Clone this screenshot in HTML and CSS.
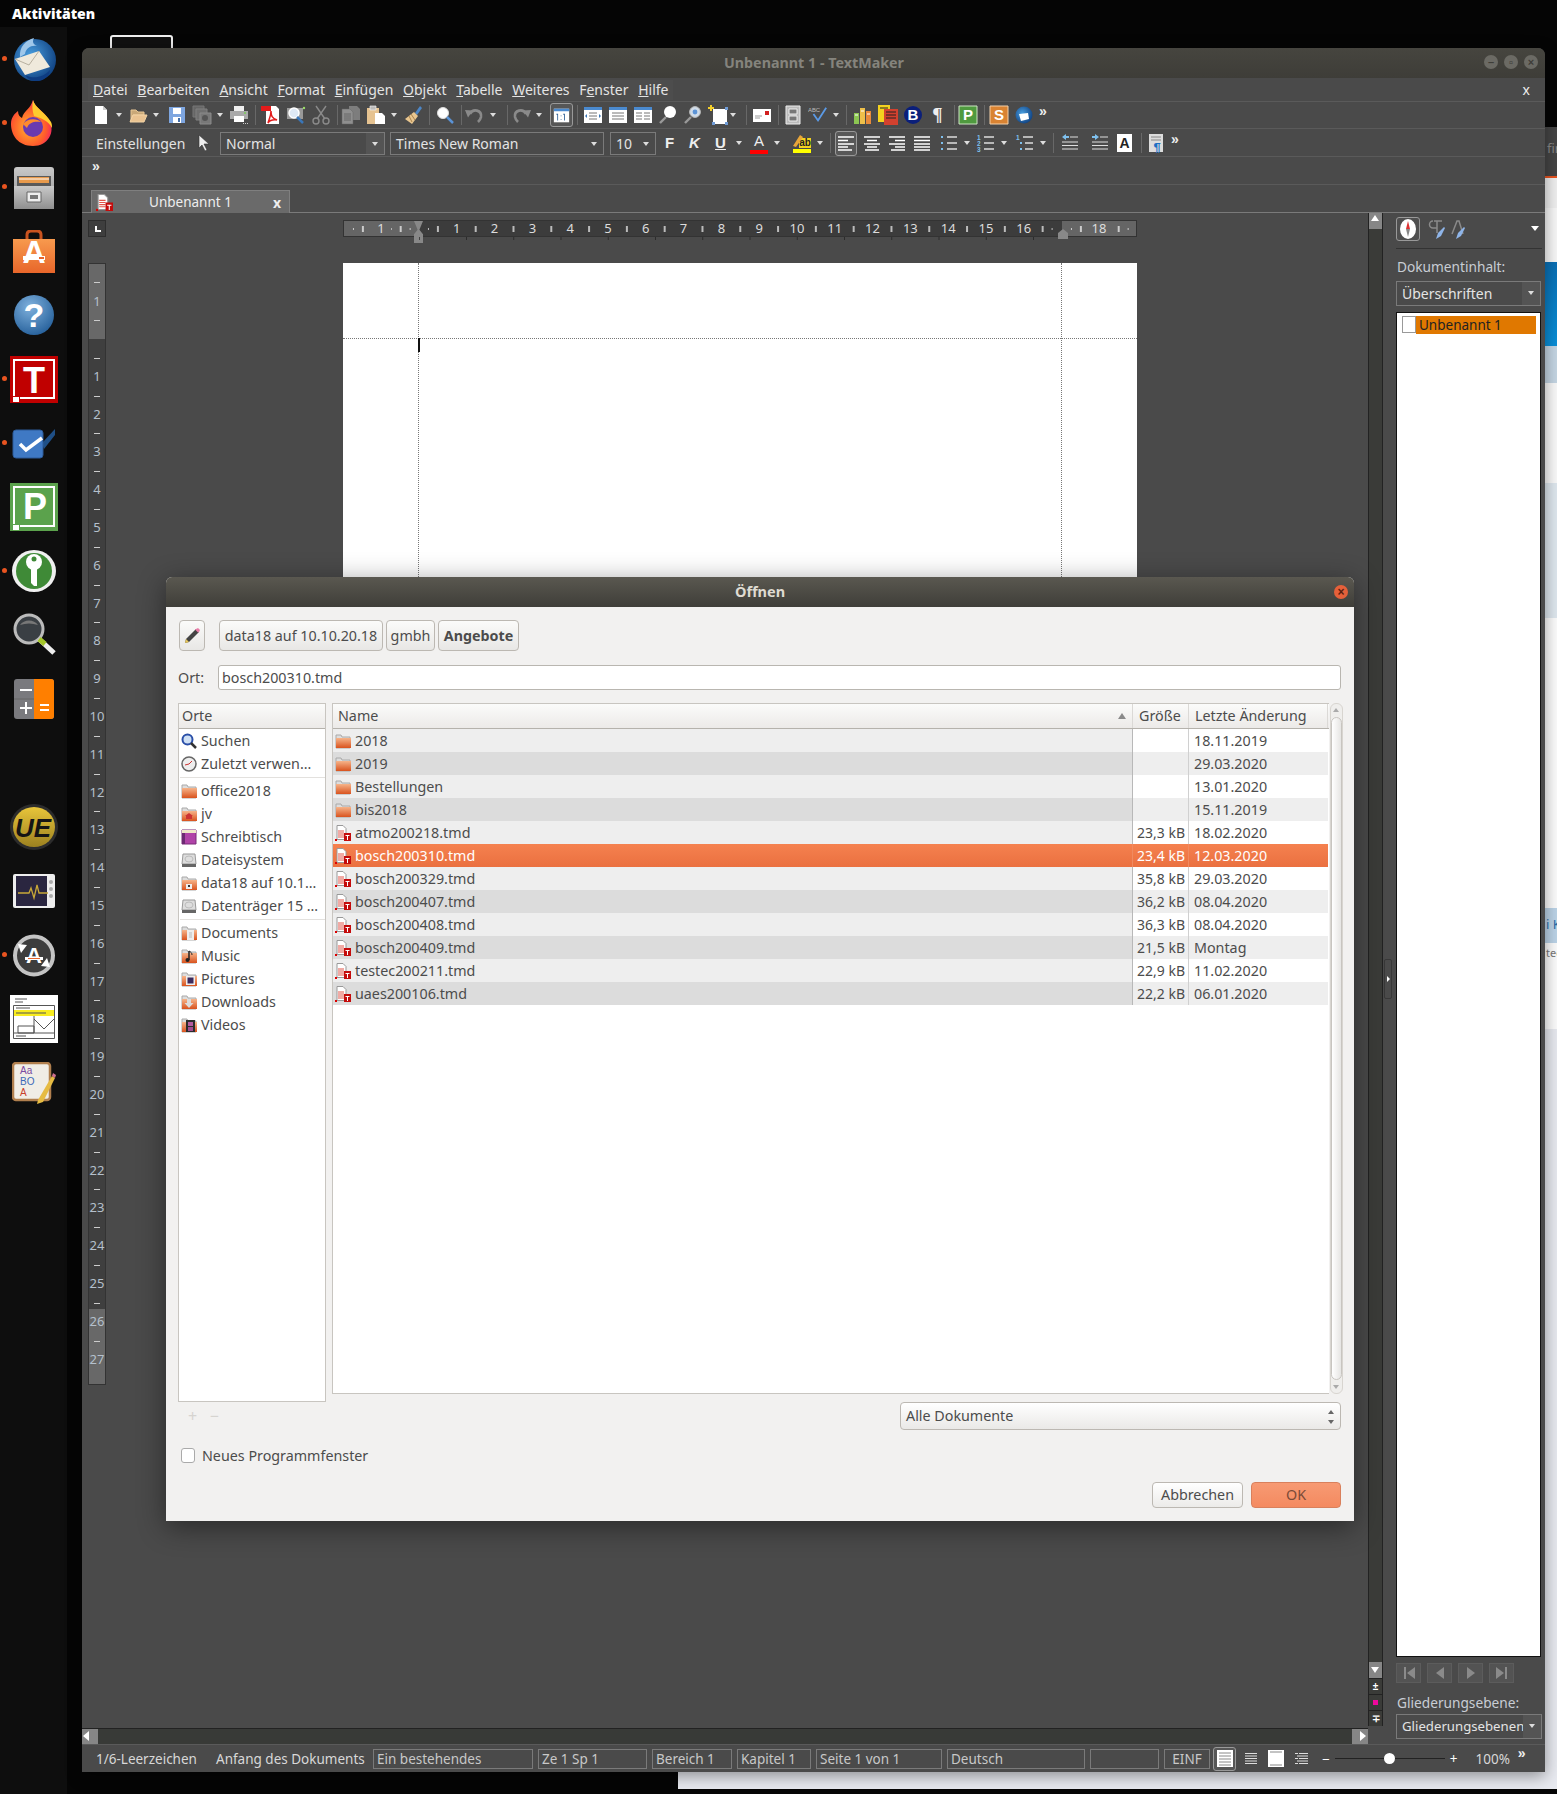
FILE: index.html
```html
<!DOCTYPE html>
<html lang="de">
<head>
<meta charset="utf-8">
<title>TextMaker</title>
<link rel="stylesheet" href="styles.css">
</head>
<body>
<svg class="defs" xmlns="http://www.w3.org/2000/svg">
  <defs>
    <linearGradient id="gFolder" x1="0" y1="0" x2="0" y2="1"><stop offset="0" stop-color="#f6b48a"/><stop offset="1" stop-color="#d9531e"/></linearGradient>
    <linearGradient id="gOrange" x1="0" y1="0" x2="0" y2="1"><stop offset="0" stop-color="#f79a4e"/><stop offset="1" stop-color="#e8662a"/></linearGradient>
    <linearGradient id="gGold" x1="0" y1="0" x2="0" y2="1"><stop offset="0" stop-color="#e8c53a"/><stop offset="1" stop-color="#9c8120"/></linearGradient>
    <linearGradient id="gCab" x1="0" y1="0" x2="0" y2="1"><stop offset="0" stop-color="#c9c9c9"/><stop offset="1" stop-color="#8f8f8f"/></linearGradient>
    <radialGradient id="gHelp" cx=".4" cy=".3" r=".8"><stop offset="0" stop-color="#7fb1dd"/><stop offset="1" stop-color="#1f5a96"/></radialGradient>
    <radialGradient id="gTb" cx=".4" cy=".4" r=".7"><stop offset="0" stop-color="#4a9fe0"/><stop offset="1" stop-color="#0b3a7a"/></radialGradient>
    <radialGradient id="gFf" cx=".45" cy=".6" r=".6"><stop offset="0" stop-color="#ffb52e"/><stop offset=".7" stop-color="#ff5a2c"/><stop offset="1" stop-color="#f01f6a"/></radialGradient>
    <symbol id="new" viewBox="0 0 20 20"><path d="M4 1h8l4 4v14H4z" fill="#fff"/><path d="M12 1v4h4" fill="#ccc"/></symbol>
    <symbol id="open" viewBox="0 0 20 20"><path d="M3 5h5l2 2h6v3H5L3 17z" fill="#c9a878" stroke="#e9c794"/><path d="M5 10h14l-3 7H2z" fill="#eac391" stroke="#f3d3a5"/></symbol>
    <symbol id="save" viewBox="0 0 20 20"><path d="M2 2h16v16H2z" fill="#7ea6e0"/><path d="M6 3h8v6H6z" fill="#fff"/><path d="M6 12h8v6H6z" fill="#fff"/><path d="M11 13h2v4h-2z" fill="#466fa8"/></symbol>
    <symbol id="saveall" viewBox="0 0 20 20"><path d="M1 1h11v11H1z" fill="#666" stroke="#777"/><path d="M4 4h11v11H4z" fill="#6f6f6f" stroke="#808080"/><path d="M8 8h11v11H8z" fill="#787878" stroke="#8a8a8a"/><circle cx="13" cy="13" r="3" fill="#555"/></symbol>
    <symbol id="print" viewBox="0 0 20 20"><path d="M5 1h10v5H5z" fill="#eee"/><path d="M1 6h18v8H1z" fill="#aaa"/><path d="M5 11h10v6H5z" fill="#fff"/><circle cx="16" cy="8" r="1" fill="#7c5"/><path d="M14 18h1v1h-1zM16 18h1v1h-1zM18 18h1v1h-1z" fill="#ccc"/></symbol>
    <symbol id="pdf" viewBox="0 0 20 20"><path d="M5 1h10l3 3v15H5z" fill="#fff"/><path d="M0 1h10v5H0z" fill="#e21b1b"/><path d="M10 6c0 5 1 7 6 9-4-.5-7 0-9 3 1-4 3-7 3-12z" fill="none" stroke="#e21b1b" stroke-width="1.5"/></symbol>
    <symbol id="preview" viewBox="0 0 20 20"><path d="M1 3h16v11H1z" fill="#999"/><circle cx="8" cy="8" r="5" fill="#dfe9f5" stroke="#fff" stroke-width="1.5"/><path d="M11 12l6 6" stroke="#3a76b8" stroke-width="2.5"/><circle cx="18" cy="3" r="1.2" fill="#9d6"/></symbol>
    <symbol id="cut" viewBox="0 0 20 20"><path d="M5 1l9 13M15 1L6 14" stroke="#8a8a8a" stroke-width="1.4" fill="none"/><circle cx="5" cy="16" r="3" fill="none" stroke="#8a8a8a" stroke-width="1.4"/><circle cx="15" cy="16" r="3" fill="none" stroke="#8a8a8a" stroke-width="1.4"/></symbol>
    <symbol id="copy" viewBox="0 0 20 20"><path d="M8 1h8l3 3v11H8z" fill="#7d7d7d"/><path d="M1 4h8l3 3v12H1z" fill="#8f8f8f" stroke="#666" stroke-width=".5"/><path d="M3 9h7M3 11h7M3 13h7M3 15h7" stroke="#666"/></symbol>
    <symbol id="paste" viewBox="0 0 20 20"><path d="M1 3h12v16H1z" fill="#e6c391"/><path d="M4 1h6v4H4z" fill="#bbb" stroke="#eee" stroke-width=".7"/><path d="M9 8h7l3 3v8H9z" fill="#fff"/></symbol>
    <symbol id="brush" viewBox="0 0 20 20"><path d="M12 8L17 1l2 2-5 7z" fill="#4d86c6"/><path d="M11 7l4 4-6 8-7-5z" fill="#e9c68f"/><path d="M6 11l3 6M8 9l4 6" stroke="#a8824c"/></symbol>
    <symbol id="find" viewBox="0 0 20 20"><circle cx="8" cy="8" r="5.500" fill="#fff" stroke="#ddd"/><path d="M12 12l6 6" stroke="#5b93d6" stroke-width="2.500"/></symbol>
    <symbol id="undo" viewBox="0 0 20 20"><path d="M5 9c3-6 12-4 11 3-.4 2-1 3-3 5" fill="none" stroke="#8a8a8a" stroke-width="2.6"/><path d="M0 5l8 .5-5 7z" fill="#8a8a8a"/></symbol>
    <symbol id="redo" viewBox="0 0 20 20"><path d="M15 9C12 3 3 5 4 12c.4 2 1 3 3 5" fill="none" stroke="#8a8a8a" stroke-width="2.6"/><path d="M20 5l-8 .5 5 7z" fill="#8a8a8a"/></symbol>
    <symbol id="v11" viewBox="0 0 20 20"><path d="M1 2h18v16H1z" fill="#fff"/><path d="M1 2h18v3H1z" fill="#4a8ad0"/><path d="M4 8h2v8H5V9H4zM12 8h2v8h-1V9h-1zM9 10h1v1H9zM9 14h1v1H9z" fill="#2d5f96"/></symbol>
    <symbol id="vnorm" viewBox="0 0 20 20"><path d="M1 2h18v16H1z" fill="#fff"/><path d="M1 2h18v3H1z" fill="#4a8ad0"/><path d="M6 8h8M6 11h8M6 14h8" stroke="#777"/><path d="M2 11l2-2v4zM18 11l-2-2v4z" fill="#3a76b8"/></symbol>
    <symbol id="vlines" viewBox="0 0 20 20"><path d="M1 2h18v16H1z" fill="#fff"/><path d="M1 2h18v3H1z" fill="#4a8ad0"/><path d="M4 8h12M4 11h12M4 14h12" stroke="#777"/></symbol>
    <symbol id="vtable" viewBox="0 0 20 20"><path d="M1 2h18v16H1z" fill="#fff"/><path d="M1 2h18v3H1z" fill="#4a8ad0"/><path d="M3 8h6M3 11h6M3 14h6M11 8h6M11 11h6M11 14h6" stroke="#777"/></symbol>
    <symbol id="mag" viewBox="0 0 20 20"><circle cx="12" cy="7" r="6" fill="#fff"/><path d="M8 12l-6 6" stroke="#999" stroke-width="2.4"/></symbol>
    <symbol id="magb" viewBox="0 0 20 20"><circle cx="12" cy="7" r="5.4" fill="#cfdbe8" stroke="#bbb"/><circle cx="12" cy="7" r="2.4" fill="#5b93d6"/><path d="M8 12l-6 6" stroke="#999" stroke-width="2.4"/></symbol>
    <symbol id="frame" viewBox="0 0 20 20"><path d="M5 4h14v15H5z" fill="#fff"/><path d="M3 0v6M0 3h6" stroke="#f4cf2a" stroke-width="2"/><path d="M17 2h3v3h-3zM4 17h3v3H4zM17 17h3v3h-3z" fill="#6f9bd6"/></symbol>
    <symbol id="mail" viewBox="0 0 20 20"><path d="M1 4h18v13H1z" fill="#fff"/><path d="M13 6h4v4h-4z" fill="#d21f1f"/><path d="M3 11h7M3 13h5" stroke="#999"/></symbol>
    <symbol id="pagef" viewBox="0 0 20 20"><path d="M3 1h14v18H3z" fill="#bbb" stroke="#eee"/><path d="M6 4h8v5H6zM6 11h8v5H6z" fill="#777" stroke="#eee"/></symbol>
    <symbol id="spell" viewBox="0 0 22 20"><text x="0" y="7" class="svgt8">ABC</text><path d="M6 9l5 7 9-14" fill="none" stroke="#5b9ae6" stroke-width="2"/></symbol>
    <symbol id="books" viewBox="0 0 20 20"><path d="M1 8h5v11H1z" fill="#8cc652"/><path d="M7 3h5v16H7z" fill="#eec04a"/><path d="M13 6h5v13h-5z" fill="#e88a3a"/><path d="M2 10h3M8 6h3M14 9h3" stroke="#fff"/></symbol>
    <symbol id="db" viewBox="0 0 20 20"><path d="M0 0h12v17H0z" fill="#f4d21f"/><path d="M6 4h14v16H6z" fill="#d2412f"/><path d="M2 3h8M8 7h10M8 10h10M8 13h10" stroke="#222" stroke-width="1.2"/></symbol>
    <symbol id="bcirc" viewBox="0 0 20 20"><circle cx="10" cy="10" r="9" fill="#0b1f7a"/><text x="10" y="15" class="svgb">B</text></symbol>
    <symbol id="gp" viewBox="0 0 20 20"><path d="M1 1h18v18H1z" fill="#4f9a3f" stroke="#cde5c3"/><text x="10" y="15" class="svgb">P</text></symbol>
    <symbol id="os" viewBox="0 0 20 20"><path d="M1 1h18v18H1z" fill="#d98332" stroke="#f4d0a8"/><text x="10" y="15" class="svgb">S</text></symbol>
    <symbol id="tbird" viewBox="0 0 20 20"><circle cx="10" cy="10" r="8.5" fill="url(#gTb)"/><path d="M5 9l9-1 1 6-8 2z" fill="#fff"/></symbol>
    <symbol id="alignl" viewBox="0 0 20 20"><path d="M2 4h16M2 7.500h10M2 11h16M2 14h10M2 17h14" stroke="#fff" stroke-width="1.4"/></symbol>
    <symbol id="alignc" viewBox="0 0 20 20"><path d="M2 4h16M5 7.500h10M2 11h16M5 14h10M3 17h14" stroke="#fff" stroke-width="1.4"/></symbol>
    <symbol id="alignr" viewBox="0 0 20 20"><path d="M2 4h16M8 7.500h10M2 11h16M8 14h10M4 17h14" stroke="#fff" stroke-width="1.4"/></symbol>
    <symbol id="alignj" viewBox="0 0 20 20"><path d="M2 4h16M2 7.500h16M2 11h16M2 14h16M2 17h16" stroke="#fff" stroke-width="1.4"/></symbol>
    <symbol id="bul" viewBox="0 0 20 20"><path d="M2 3h2v2H2zM2 9h2v2H2zM2 15h2v2H2z" fill="#7fc0ee"/><path d="M8 4h10M8 10h10M8 16h10" stroke="#ddd" stroke-width="1.3"/></symbol>
    <symbol id="num" viewBox="0 0 20 20"><text x="1" y="7" class="svgn">1</text><text x="1" y="13" class="svgn">2</text><text x="1" y="19" class="svgn">3</text><path d="M8 4h10M8 10h10M8 16h10" stroke="#ddd" stroke-width="1.3"/></symbol>
    <symbol id="outl" viewBox="0 0 20 20"><text x="1" y="7" class="svgn">1</text><path d="M5 9h2v2H5zM5 15h2v2H5z" fill="#7fc0ee"/><path d="M8 4h10M10 10h8M10 16h8" stroke="#ddd" stroke-width="1.3"/></symbol>
    <symbol id="indl" viewBox="0 0 20 20"><path d="M10 4h8M2 9h16M2 12.500h16M2 16h16" stroke="#ddd" stroke-width="1.2"/><path d="M2 4l4-3v2h3v2H6v2z" fill="#7fc0ee"/></symbol>
    <symbol id="indr" viewBox="0 0 20 20"><path d="M10 4h8M2 9h16M2 12.500h16M2 16h16" stroke="#ddd" stroke-width="1.2"/><path d="M9 4L5 1v2H2v2h3v2z" fill="#7fc0ee"/></symbol>
    <symbol id="para" viewBox="0 0 20 20"><path d="M3 1h14v18H3z" fill="#ddd"/><path d="M5 4h10M5 7h10" stroke="#888"/><text x="11" y="19" class="svgp">¶</text></symbol>
    <symbol id="tmd" viewBox="0 0 16 16"><path d="M2 .5h6l3 3v11H2z" fill="#fff" stroke="#999"/><path d="M3 6h6M3 8h6M3 10h6M3 12h6" stroke="#e2564a"/><path d="M0 14h2v2H0z" fill="#d00"/><path d="M9 8h7v8H9z" fill="#c40b0b"/><path d="M10.500 10h4v1h-1.500v4h-1v-4h-1.500z" fill="#fff"/></symbol>
    <symbol id="folder" viewBox="0 0 16 16"><path d="M1 2h5l1 2h8v11H1z" fill="#ddd" stroke="#aaa"/><path d="M1 5h15v10H1z" fill="url(#gFolder)"/></symbol>
    <symbol id="fhome" viewBox="0 0 16 16"><use href="#folder"/><path d="M8 7l4 3h-1v3H5v-3H4z" fill="#c33"/></symbol>
    <symbol id="fnet" viewBox="0 0 16 16"><use href="#folder"/><path d="M5 9h6v5H5z" fill="#eee"/><path d="M7 10h2v2H7z" fill="#333"/></symbol>
    <symbol id="fdoc" viewBox="0 0 16 16"><use href="#folder"/><path d="M6 5h7v10H6z" fill="#eee"/><path d="M8 8h3M8 10h3M8 12h3" stroke="#bbb"/></symbol>
    <symbol id="fmus" viewBox="0 0 16 16"><use href="#folder"/><path d="M8 3v9" stroke="#222" stroke-width="1.500"/><path d="M8 3c2 1 3 2 3 4" fill="none" stroke="#222"/><circle cx="6.500" cy="12" r="2" fill="#222"/></symbol>
    <symbol id="fpic" viewBox="0 0 16 16"><use href="#folder"/><path d="M5 5h9v9H5z" fill="#eee"/><path d="M6.500 6.500h6v6h-6z" fill="#3c2a5c"/></symbol>
    <symbol id="fdown" viewBox="0 0 16 16"><use href="#folder"/><path d="M6 5h4v4h2.500L8 14 3.500 9H6z" fill="#ddd"/></symbol>
    <symbol id="fvid" viewBox="0 0 16 16"><use href="#folder"/><path d="M5 3h9v12H5z" fill="#2c2c2c"/><path d="M7 5h5v4H7z" fill="#b45aa0"/><path d="M7 10h5v4H7z" fill="#a14a90"/></symbol>
    <symbol id="search" viewBox="0 0 16 16"><circle cx="6.500" cy="6.500" r="5" fill="#cfe0f4" stroke="#2a4fa8" stroke-width="2"/><path d="M10 10l5 5" stroke="#333" stroke-width="2.500"/></symbol>
    <symbol id="clock" viewBox="0 0 16 16"><circle cx="8" cy="8" r="7" fill="#eee" stroke="#666" stroke-width="1.500"/><path d="M8 8l3-3M8 8L4 9" stroke="#c33"/></symbol>
    <symbol id="desk" viewBox="0 0 16 16"><path d="M1 1h14v14H1z" fill="#b043a8" stroke="#7a2a78"/><path d="M1 1h14v3H1z" fill="#eee8c8"/><path d="M1 4h3v11H1z" fill="#6c2a72"/></symbol>
    <symbol id="disk" viewBox="0 0 16 16"><path d="M2 2h12l1 10H1z" fill="#ddd" stroke="#999"/><path d="M1 12h14v3H1z" fill="#666"/><ellipse cx="8" cy="7" rx="4" ry="3" fill="none" stroke="#bbb"/></symbol>
  </defs>
</svg>

<div class="strip-top"><b>Aktivitäten</b></div>
<div class="thumb"></div>

<div class="backwin">
  <div class="bw bw-title"><span>fir</span></div>
  <div class="bw bw-orange"></div>
  <div class="bw bw-light"></div>
  <div class="bw bw-w1"></div>
  <div class="bw bw-blue"></div>
  <div class="bw bw-pale"></div>
  <div class="bw bw-w2"></div>
  <div class="bw bw-pale2"></div>
  <div class="bw bw-w3"></div>
  <div class="bw bw-link"><span>i K</span></div>
  <div class="bw bw-text"><span>tec</span></div>
  <div class="bw bw-rest"></div>
</div>

<nav class="dock">
  <div class="di dot"><svg width="44" height="45" viewBox="0 0 44 45"><circle cx="23" cy="23" r="21" fill="url(#gTb)"/><path d="M8 20C7 10 14 3 22 1c-2 4-1 6 3 8-6-1-11 2-12 8z" fill="#9fc7ea"/><path d="M3 22l24-8 11 16-25 8z" fill="#efe9dc"/><path d="M3 22l14 6 10-14" fill="none" stroke="#b8b0a0"/><path d="M13 38c8 4 18 3 25-5 0 6-8 12-14 11-5 0-9-3-11-6z" fill="#0e3c82"/></svg></div>
  <div class="di dot"><svg width="45" height="46" viewBox="0 0 45 46"><path d="M22 0c2 8 10 10 16 20 7 12-1 26-16 26S0 35 0 24c0-6 3-10 7-13 0 4 2 6 4 7 2-8 8-8 11-18z" fill="url(#gFf)"/><path d="M22 0c2 8 12 12 18 22 1 2 1 4 1 6-4-8-12-10-18-12C21 10 21 5 22 0z" fill="#ffcb2e"/><circle cx="22" cy="27" r="10" fill="#6a3ab0"/><path d="M12 24c4-6 14-6 18-2-6-1-12 0-14 6z" fill="#ff8a2c"/></svg></div>
  <div class="di dot"><svg width="42" height="43" viewBox="0 0 42 43"><path d="M1 4q0-3 3-3h34q3 0 3 3v36q0 3-3 3H4q-3 0-3-3z" fill="url(#gCab)"/><path d="M4 10h34v12H4z" fill="#5a5a5a"/><path d="M6 11h30v6H6z" fill="#e89a4c"/><path d="M6 13h30" stroke="#fff"/><path d="M1 20h40v23H1z" fill="url(#gCab)"/><path d="M14 26h14v10H14z" fill="#eee" stroke="#666"/><path d="M17 29h8v4h-8z" fill="#777"/></svg></div>
  <div class="di"><svg width="42" height="43" viewBox="0 0 42 43"><path d="M14 12V5q0-4 4-4h6q4 0 4 4v7" fill="none" stroke="#c9531f" stroke-width="3"/><path d="M0 9h42v34H0z" fill="url(#gOrange)"/><text x="21" y="33" class="svga">A</text><path d="M10 26h22v4H10z" fill="#fff"/><path d="M26 27h5v2h-5z" fill="#e8662a"/></svg></div>
  <div class="di"><svg width="40" height="40" viewBox="0 0 40 40"><circle cx="20" cy="20" r="20" fill="url(#gHelp)"/><text x="20" y="32" class="svgq">?</text></svg></div>
  <div class="di dot"><svg width="48" height="47" viewBox="0 0 48 47"><path d="M0 0h48v47H0z" fill="#c00000"/><path d="M4 40V4h40v38H10" fill="none" stroke="#fff" stroke-width="2"/><path d="M3 41h6v5H3z" fill="#fff"/><text x="24" y="37" class="svgT">T</text></svg></div>
  <div class="di dot"><svg width="44" height="32" viewBox="0 0 44 32"><path d="M30 16L43 2v6L32 22z" fill="#1f4f86"/><rect x="1" y="3" width="30" height="28" rx="3" fill="#3f79c4" stroke="#2c5a98"/><path d="M8 17l6 6L30 11" fill="none" stroke="#fff" stroke-width="3.500"/></svg></div>
  <div class="di"><svg width="48" height="48" viewBox="0 0 48 48"><path d="M0 0h48v48H0z" fill="#5ba24c"/><path d="M4 41V4h40v39H10" fill="none" stroke="#fff" stroke-width="2"/><path d="M3 42h6v5H3z" fill="#fff"/><text x="25" y="36" class="svgT">P</text></svg></div>
  <div class="di dot"><svg width="44" height="42" viewBox="0 0 44 42"><ellipse cx="22" cy="21" rx="22" ry="21" fill="#f0f0f0"/><ellipse cx="22" cy="21" rx="18" ry="18" fill="#3f8a37"/><circle cx="22" cy="12" r="8" fill="#fff"/><path d="M19 14h6v22h-3l-3-3z" fill="#fff"/><circle cx="22" cy="9" r="2.500" fill="#3f8a37"/></svg></div>
  <div class="di"><svg width="44" height="44" viewBox="0 0 44 44"><circle cx="17" cy="16" r="14" fill="#3a3f44" stroke="#bbb" stroke-width="3"/><path d="M8 12c4-6 14-6 18 0-6-2-12-2-18 0z" fill="#777"/><path d="M27 26l15 14" stroke="#eee" stroke-width="5"/><path d="M27 26l6 5" stroke="#a4c62a" stroke-width="5"/></svg></div>
  <div class="di"><svg width="40" height="40" viewBox="0 0 40 40"><rect width="40" height="40" rx="3" fill="#7a7a7e"/><path d="M20 0h17q3 0 3 3v34q0 3-3 3H20z" fill="#ff7f00"/><path d="M6 11h12M6 29h12M12 23v12M26 26h9M26 31h9" stroke="#fff" stroke-width="2"/><path d="M0 20h20" stroke="#666"/></svg></div>
  <div class="di"></div>
  <div class="di"><svg width="48" height="48" viewBox="0 0 48 48"><ellipse cx="24" cy="24" rx="24" ry="23" fill="#2c2c2c"/><ellipse cx="24" cy="24" rx="21" ry="20" fill="url(#gGold)"/><text x="23" y="34" class="svgue">UE</text></svg></div>
  <div class="di"><svg width="42" height="34" viewBox="0 0 42 34"><rect width="42" height="34" rx="2" fill="#eee"/><path d="M3 2h31v30H3z" fill="#2a2640"/><path d="M5 19h11l2-5 3 10 3-13 2 8h9" fill="none" stroke="#c8a838" stroke-width="1.300"/><circle cx="38" cy="8" r="2" fill="#aaa"/><circle cx="38" cy="15" r="2" fill="#aaa"/><circle cx="38" cy="22" r="2" fill="#aaa"/></svg></div>
  <div class="di dot"><svg width="42" height="43" viewBox="0 0 42 43"><circle cx="21" cy="21.500" r="19" fill="#3d3d3d" stroke="#c4c4c4" stroke-width="4"/><path d="M5 10l9 1-6 8zM37 33l-9-1 6-8z" fill="#fff"/><text x="21" y="29" class="svgupd">A</text><path d="M12 23h18v3H12z" fill="#fff"/><path d="M15 24h12v1H15z" fill="#e8662a"/></svg></div>
  <div class="di"><svg width="48" height="48" viewBox="0 0 48 48"><path d="M0 0h48v48H0z" fill="#fff"/><path d="M5 4h12M5 7h8" stroke="#555"/><path d="M3.500 10.500h41v33h-41z" fill="#fff" stroke="#555"/><path d="M4 15h40v6H4z" fill="#f8ec20"/><path d="M6 13h14M6 18h30M4 38h40M24 21v17" stroke="#555"/><path d="M8 31h16v7H8zM24 24l10 10 10-10" fill="none" stroke="#555"/><path d="M6 41h10" stroke="#555"/></svg></div>
  <div class="di"><svg width="44" height="42" viewBox="0 0 44 42"><rect x="1" y="1" width="37" height="37" rx="3" fill="#f0ede6" stroke="#b07f4e" stroke-width="2.500"/><text x="8" y="12" class="svgnote1">Aa</text><text x="8" y="23" class="svgnote2">BO</text><text x="8" y="34" class="svgnote3">A</text><path d="M26 38L40 14l3 2-12 24-6 2z" fill="#e6bb42"/><path d="M40 14l3 2 1-3-3-2z" fill="#d07090"/></svg></div>
</nav>

<section class="win">
  <header class="win-title">
    <span class="wt">Unbenannt 1 - TextMaker</span>
    <span class="wbtns"><i>–</i><i>▫</i><i>×</i></span>
  </header>
  <div class="menubar">
    <div class="menus">
      <span><u>D</u>atei</span><span><u>B</u>earbeiten</span><span><u>A</u>nsicht</span><span><u>F</u>ormat</span><span><u>E</u>infügen</span><span><u>O</u>bjekt</span><span><u>T</u>abelle</span><span><u>W</u>eiteres</span><span>F<u>e</u>nster</span><span><u>H</u>ilfe</span>
    </div>
    <span class="mclose">x</span>
  </div>

  <div class="tb t1">
    <span class="b"><svg><use href="#new"/></svg></span><span class="d"></span>
    <span class="b"><svg><use href="#open"/></svg></span><span class="d"></span>
    <span class="b g2"><svg><use href="#save"/></svg></span>
    <span class="b"><svg><use href="#saveall"/></svg></span><span class="d"></span>
    <span class="b"><svg><use href="#print"/></svg></span><span class="s"></span>
    <span class="b r1"><svg><use href="#pdf"/></svg></span>
    <span class="b"><svg><use href="#preview"/></svg></span>
    <span class="b"><svg><use href="#cut"/></svg></span><span class="s"></span>
    <span class="b r3"><svg><use href="#copy"/></svg></span>
    <span class="b"><svg><use href="#paste"/></svg></span><span class="d"></span>
    <span class="b"><svg><use href="#brush"/></svg></span><span class="s"></span>
    <span class="b r1"><svg><use href="#find"/></svg></span><span class="s"></span>
    <span class="b r3"><svg><use href="#undo"/></svg></span><span class="d"></span><span class="s g4"></span>
    <span class="b r3"><svg><use href="#redo"/></svg></span><span class="d"></span>
    <span class="b box g5"><svg><use href="#v11"/></svg></span><span class="s"></span>
    <span class="b r1"><svg><use href="#vnorm"/></svg></span>
    <span class="b"><svg><use href="#vlines"/></svg></span>
    <span class="b"><svg><use href="#vtable"/></svg></span>
    <span class="b"><svg><use href="#mag"/></svg></span>
    <span class="b"><svg><use href="#magb"/></svg></span>
    <span class="b"><svg><use href="#frame"/></svg></span><span class="d r3"></span><span class="s g3"></span>
    <span class="b r1"><svg><use href="#mail"/></svg></span><span class="s"></span>
    <span class="b r2"><svg><use href="#pagef"/></svg></span>
    <span class="b"><svg><use href="#spell"/></svg></span><span class="d"></span><span class="s"></span>
    <span class="b"><svg><use href="#books"/></svg></span>
    <span class="b"><svg><use href="#db"/></svg></span>
    <span class="b"><svg><use href="#bcirc"/></svg></span>
    <span class="b pil">¶</span><span class="s"></span>
    <span class="b r3"><svg><use href="#gp"/></svg></span><span class="s"></span>
    <span class="b r2"><svg><use href="#os"/></svg></span>
    <span class="b"><svg><use href="#tbird"/></svg></span>
    <span class="more">»</span>
  </div>

  <div class="tb t2">
    <span class="tlabel">Einstellungen</span>
    <svg class="cursor" width="14" height="18" viewBox="0 0 14 18"><path d="M2 1v13l3-3 3 6 2-1-3-6h5z" fill="#eee" stroke="#333" stroke-width=".6"/></svg>
    <span class="combo c-norm">Normal<em></em></span>
    <span class="combo c-font">Times New Roman<em></em></span>
    <span class="combo c-size">10<em></em></span>
    <span class="b g1 fmt fb">F</span><span class="b fmt fi">K</span><span class="b g1 fmt fu">U</span><span class="d"></span>
    <span class="b g2 fmt fa">A</span><span class="d"></span>
    <svg class="hl" width="25" height="22" viewBox="0 0 25 22"><path d="M4 17h18v4H4z" fill="#ff0"/><path d="M10 6h12v10H10z" fill="#f4d21f"/><path d="M4 14l7-11 3 2-7 10z" fill="#e8a63a"/><text x="16" y="14" class="svghl">ab</text></svg><span class="d"></span><span class="s"></span>
    <span class="b box2 g1"><svg><use href="#alignl"/></svg></span>
    <span class="b g2"><svg><use href="#alignc"/></svg></span>
    <span class="b"><svg><use href="#alignr"/></svg></span>
    <span class="b"><svg><use href="#alignj"/></svg></span>
    <span class="b g2"><svg><use href="#bul"/></svg></span><span class="d"></span>
    <span class="b"><svg><use href="#num"/></svg></span><span class="d"></span>
    <span class="b g2"><svg><use href="#outl"/></svg></span><span class="d"></span><span class="s"></span>
    <span class="b"><svg><use href="#indl"/></svg></span>
    <span class="b g5"><svg><use href="#indr"/></svg></span>
    <span class="b"><span class="abox">A</span></span><span class="s"></span>
    <span class="b r2"><svg><use href="#para"/></svg></span>
    <span class="more">»</span>
  </div>

  <div class="tb t3"><span class="more">»</span></div>

  <div class="tabs">
    <div class="tab"><svg width="17" height="17"><use href="#tmd"/></svg><span>Unbenannt 1</span><b>x</b></div>
  </div>

  <div class="body">
    <div class="left">
      <div class="doc">
        <div class="corner"><span></span></div>
        <div class="hruler">
          <div class="hr-side hr-l"><span class="rn rn1">1</span></div>
          <div class="hr-mid">
            <span>1</span><span>2</span><span>3</span><span>4</span><span>5</span><span>6</span><span>7</span><span>8</span><span>9</span><span>10</span><span>11</span><span>12</span><span>13</span><span>14</span><span>15</span><span>16</span>
          </div>
          <div class="hr-side hr-r"><span class="rn rn18">18</span></div>
          <i class="marker m-l"></i><i class="marker m-r"></i>
        </div>
        <div class="vruler">
          <div class="vr-light vr-top"><span>1</span></div>
          <div class="vr-cells">
            <span>1</span><span>2</span><span>3</span><span>4</span><span>5</span><span>6</span><span>7</span><span>8</span><span>9</span><span>10</span><span>11</span><span>12</span><span>13</span><span>14</span><span>15</span><span>16</span><span>17</span><span>18</span><span>19</span><span>20</span><span>21</span><span>22</span><span>23</span><span>24</span><span>25</span><span>26</span><span>27</span>
          </div>
        </div>
        <div class="page">
          <i class="pl pl-v1"></i><i class="pl pl-v2"></i><i class="pl pl-h"></i><i class="caret"></i>
        </div>
      </div>
      <div class="hscroll"><span class="sb sb-l"></span><span class="sb sb-r"></span></div>
    </div>
    <div class="vscroll">
      <span class="vb vb-up"></span>
      <span class="vfill"></span>
      <span class="vb vb-dn"></span>
      <span class="vs">±</span><span class="vs vdot"><i></i></span><span class="vs">∓</span>
    </div>
    <aside class="side">
      <i class="handle"></i>
      <div class="side-tabs">
        <span class="compass"><svg width="18" height="22" viewBox="0 0 18 22"><ellipse cx="9" cy="11" rx="8" ry="10" fill="#fff"/><path d="M9 3l2 8H7z" fill="#d33"/><path d="M9 19l2-8H7z" fill="#888"/></svg></span>
        <svg class="st" width="18" height="22" viewBox="0 0 18 22"><path d="M6 2h8M9 2v12M5 2a3 3 0 0 0 0 7h4" fill="none" stroke="#8a8a8a" stroke-width="1.500"/><path d="M8 20l2-6 6-6 1 1-4 8z" fill="#8eb4e8"/></svg>
        <svg class="st" width="18" height="22" viewBox="0 0 18 22"><path d="M2 15L7 2h2l4 13" fill="none" stroke="#8a8a8a" stroke-width="1.500"/><path d="M6 20l2-6 6-6 1 1-4 8z" fill="#8eb4e8"/></svg>
        <i class="sd"></i>
      </div>
      <div class="side-label">Dokumentinhalt:</div>
      <span class="combo c-side">Überschriften<em></em></span>
      <div class="outline"><div class="o-item"><i></i><span>Unbenannt 1</span></div></div>
      <div class="nav">
        <span><svg width="14" height="14" viewBox="0 0 14 14"><path d="M2 1h2v12H2zM13 1L5 7l8 6z" fill="#8a8a8a"/></svg></span>
        <span><svg width="14" height="14" viewBox="0 0 14 14"><path d="M11 1L3 7l8 6z" fill="#8a8a8a"/></svg></span>
        <span><svg width="14" height="14" viewBox="0 0 14 14"><path d="M3 1l8 6-8 6z" fill="#8a8a8a"/></svg></span>
        <span><svg width="14" height="14" viewBox="0 0 14 14"><path d="M12 1h-2v12h2zM1 1l8 6-8 6z" fill="#8a8a8a"/></svg></span>
      </div>
      <div class="side-label l2">Gliederungsebene:</div>
      <span class="combo c-side2">Gliederungsebenen<em></em></span>
    </aside>
  </div>

  <footer class="status">
    <span class="st-l w1">1/6-Leerzeichen</span>
    <span class="st-l w2">Anfang des Dokuments</span>
    <span class="sbx sw1">Ein bestehendes</span>
    <span class="sbx sw2">Ze 1 Sp 1</span>
    <span class="sbx sw3">Bereich 1</span>
    <span class="sbx sw4">Kapitel 1</span>
    <span class="sbx sw5">Seite 1 von 1</span>
    <span class="sbx sw6">Deutsch</span>
    <span class="sbx sw7"></span>
    <span class="sbx sw8">EINF</span>
    <span class="vw on"><svg width="16" height="17" viewBox="0 0 16 17"><path d="M0 0h16v17H0z" fill="#fff"/><path d="M2 3h12M2 6h12M2 9h12M2 12h12M2 15h12" stroke="#888"/></svg></span>
    <span class="vw"><svg width="14" height="14" viewBox="0 0 14 14"><path d="M1 1.500h12M1 4h12M1 6.500h12M1 9h12M1 11.500h12" stroke="#ddd"/></svg></span>
    <span class="vw"><svg width="16" height="17" viewBox="0 0 16 17"><path d="M0 0h16v17H0z" fill="#fff"/><path d="M2 2h12M2 15h12" stroke="#888"/></svg></span>
    <span class="vw"><svg width="14" height="14" viewBox="0 0 14 14"><path d="M1 1.500h3M5 1.500h9M3 4h11M1 6.500h3M5 6.500h9M3 9h11M1 11.500h3M5 11.500h9" stroke="#ddd"/></svg></span>
    <span class="zm">−</span>
    <span class="ztrack"><i></i></span>
    <span class="zp">+</span>
    <span class="zpc">100%</span>
    <span class="more">»</span>
  </footer>
</section>

<section class="dlg">
  <header class="dlg-title"><span>Öffnen</span><i class="dlg-x">×</i></header>
  <div class="dlg-body">
    <div class="pathbar">
      <span class="pbtn pen"><svg width="18" height="18" viewBox="0 0 18 18"><path d="M3 12L13 2l3 3L6 15l-4 1z" fill="#444"/><path d="M13 2l2-1 2 2-1 2-1 .5-3-3z" fill="#e87ca8"/><path d="M2 16l1-4 3 3z" fill="#e8c75a"/></svg></span>
      <span class="pbtn p1">data18 auf 10.10.20.18</span>
      <span class="pbtn p2">gmbh</span>
      <span class="pbtn p3">Angebote</span>
    </div>
    <div class="ort"><label>Ort:</label><span class="entry">bosch200310.tmd</span></div>
    <div class="panes">
      <div class="places">
        <div class="ph">Orte</div>
        <div class="pl-list">
          <div class="pr"><svg><use href="#search"/></svg>Suchen</div>
          <div class="pr"><svg><use href="#clock"/></svg>Zuletzt verwen…</div>
          <hr>
          <div class="pr"><svg><use href="#folder"/></svg>office2018</div>
          <div class="pr"><svg><use href="#fhome"/></svg>jv</div>
          <div class="pr"><svg><use href="#desk"/></svg>Schreibtisch</div>
          <div class="pr"><svg><use href="#disk"/></svg>Dateisystem</div>
          <div class="pr"><svg><use href="#fnet"/></svg>data18 auf 10.1…</div>
          <div class="pr"><svg><use href="#disk"/></svg>Datenträger 15 …</div>
          <hr>
          <div class="pr"><svg><use href="#fdoc"/></svg>Documents</div>
          <div class="pr"><svg><use href="#fmus"/></svg>Music</div>
          <div class="pr"><svg><use href="#fpic"/></svg>Pictures</div>
          <div class="pr"><svg><use href="#fdown"/></svg>Downloads</div>
          <div class="pr"><svg><use href="#fvid"/></svg>Videos</div>
        </div>
      </div>
      <div class="files">
        <div class="fh"><span class="fh-n">Name<i></i></span><span>Größe</span><span>Letzte Änderung</span></div>
        <div class="fr"><span class="n"><svg><use href="#folder"/></svg>2018</span><span class="z"></span><span class="t">18.11.2019</span></div>
        <div class="fr"><span class="n"><svg><use href="#folder"/></svg>2019</span><span class="z"></span><span class="t">29.03.2020</span></div>
        <div class="fr"><span class="n"><svg><use href="#folder"/></svg>Bestellungen</span><span class="z"></span><span class="t">13.01.2020</span></div>
        <div class="fr"><span class="n"><svg><use href="#folder"/></svg>bis2018</span><span class="z"></span><span class="t">15.11.2019</span></div>
        <div class="fr"><span class="n"><svg><use href="#tmd"/></svg>atmo200218.tmd</span><span class="z">23,3 kB</span><span class="t">18.02.2020</span></div>
        <div class="fr sel"><span class="n"><svg><use href="#tmd"/></svg>bosch200310.tmd</span><span class="z">23,4 kB</span><span class="t">12.03.2020</span></div>
        <div class="fr"><span class="n"><svg><use href="#tmd"/></svg>bosch200329.tmd</span><span class="z">35,8 kB</span><span class="t">29.03.2020</span></div>
        <div class="fr"><span class="n"><svg><use href="#tmd"/></svg>bosch200407.tmd</span><span class="z">36,2 kB</span><span class="t">08.04.2020</span></div>
        <div class="fr"><span class="n"><svg><use href="#tmd"/></svg>bosch200408.tmd</span><span class="z">36,3 kB</span><span class="t">08.04.2020</span></div>
        <div class="fr"><span class="n"><svg><use href="#tmd"/></svg>bosch200409.tmd</span><span class="z">21,5 kB</span><span class="t">Montag</span></div>
        <div class="fr"><span class="n"><svg><use href="#tmd"/></svg>testec200211.tmd</span><span class="z">22,9 kB</span><span class="t">11.02.2020</span></div>
        <div class="fr"><span class="n"><svg><use href="#tmd"/></svg>uaes200106.tmd</span><span class="z">22,2 kB</span><span class="t">06.01.2020</span></div>
      </div>
      <div class="fscroll"><i class="fs-up"></i><i class="fs-thumb"></i><i class="fs-dn"></i></div>
    </div>
    <div class="filterrow">
      <span class="pm">+&nbsp;&nbsp;&nbsp;−</span>
      <span class="filter">Alle Dokumente<em></em></span>
    </div>
    <div class="check"><i></i>Neues Programmfenster</div>
    <div class="actions"><span class="btn b-cancel">Abbrechen</span><span class="btn ok">OK</span></div>
  </div>
</section>
</body>
</html>
```
FILE: styles.css
```css
* { box-sizing: border-box; }
html, body { margin: 0; padding: 0; }
body { position: relative; width: 1557px; height: 1794px; overflow: hidden; background: #050505; font: 14px "Noto Sans", sans-serif; color: #ddd; }
.defs { position: absolute; width: 0; height: 0; }
svg text { font-family: "Liberation Sans", sans-serif; }
.svgt8 { font-size: 6.5px; fill: #bbb; }
.svgb { font-size: 15px; font-weight: 700; fill: #fff; text-anchor: middle; }
.svgn { font-size: 6.5px; font-weight: 700; fill: #7fc0ee; }
.svgp { font-size: 13px; font-weight: 700; fill: #1e6fc4; text-anchor: middle; }
.svga { font-size: 32px; font-weight: 700; fill: #fff; text-anchor: middle; }
.svgq { font-size: 34px; font-weight: 700; fill: #fff; text-anchor: middle; }
.svgT { font-size: 36px; font-weight: 700; fill: #fff; text-anchor: middle; }
.svgue { font-size: 26px; font-weight: 700; font-style: italic; fill: #151515; text-anchor: middle; }
.svgupd { font-size: 22px; font-weight: 700; fill: #fff; text-anchor: middle; }
.svghl { font-size: 10px; font-weight: 700; fill: #222; text-anchor: middle; }
.svgnote1 { font-size: 10px; fill: #7a4aa0; }
.svgnote2 { font-size: 10px; fill: #3a68b8; }
.svgnote3 { font-size: 10px; fill: #c8402a; }

.strip-top { height: 27px; padding: 5px 12px; color: #fff; font: 700 14px/18px "Noto Sans", sans-serif; }
.thumb { position: absolute; left: 110px; top: 35px; width: 63px; height: 20px; border: 2px solid #eee; border-radius: 3px 3px 0 0; background: #111; }

.backwin { position: absolute; left: 678px; right: 0; top: 127px; height: 1662px; display: flex; flex-direction: column; background: #e8eaf0; }
.bw { flex: none; padding-left: 868px; overflow: hidden; font-size: 13px; white-space: nowrap; }
.bw-title { height: 49px; background: #454545; color: #888; padding-top: 12px; padding-left: 869px; }
.bw-orange { height: 2px; background: #e95420; }
.bw-light { height: 30px; background: #f0f0f0; }
.bw-w1 { height: 54px; background: #f8f8f8; }
.bw-blue { height: 84px; background: linear-gradient(#0a6fb4, #0a8fd8); }
.bw-pale { height: 37px; background: #c5d6e4; }
.bw-w2 { height: 100px; background: #fafafa; }
.bw-pale2 { height: 135px; background: #dfe8ef; }
.bw-w3 { height: 290px; background: #fdfdfd; }
.bw-link { height: 35px; background: #bcd4e8; color: #2a6ca8; padding-top: 7px; padding-left: 868px; }
.bw-text { height: 86px; background: #fdfdfd; color: #777; font-size: 11px; padding-top: 2px; }
.bw-rest { flex: 1; background: #e8eaf0; }

.dock { position: absolute; left: 0; top: 27px; bottom: 0; width: 67px; background: #0e0e0e; }
.di { position: relative; height: 64px; display: flex; align-items: center; justify-content: center; }
.di.dot::before { content: ""; position: absolute; left: 2px; top: 29px; width: 5px; height: 5px; border-radius: 50%; background: #e95420; }

.win { position: absolute; left: 82px; top: 48px; width: 1463px; height: 1724px; display: flex; flex-direction: column; background: #4a4a4a; border-radius: 7px 7px 0 0; box-shadow: 0 4px 16px rgba(0,0,0,.4); font-size: 13.500px; }
.win-title { flex: none; height: 30px; position: relative; background: linear-gradient(#46453f, #3e3d38); border-radius: 7px 7px 0 0; display: flex; align-items: center; justify-content: center; padding-bottom: 2px; }
.wt { color: #85847d; font-weight: 700; font-size: 14.300px; margin-left: 1px; }
.wbtns { position: absolute; right: 7px; top: 7px; display: flex; gap: 6px; }
.wbtns i { width: 14px; height: 14px; border-radius: 50%; background: #6b6a64; color: #3e3d38; font: 700 11px/14px "Liberation Sans", sans-serif; text-align: center; }

.menubar { flex: none; height: 24px; display: flex; align-items: center; justify-content: space-between; border-bottom: 1px solid #5a5a5a; padding: 0 15px 0 6px; }
.menus { display: flex; gap: 9.700px; padding: 0 5px; height: 20px; align-items: center; background: #4d4d4d; color: #e4e4e4; font-size: 14px; }
.mclose { color: #eee; font-size: 14px; }

.tb { flex: none; display: flex; align-items: center; border-bottom: 1px solid #5a5a5a; }
.t1 { height: 27px; padding-left: 6px; }
.t2 { height: 28px; padding-left: 14px; padding-top: 1px; }
.t3 { height: 28px; padding-left: 7px; align-items: flex-start; padding-top: 2px; }
.b { flex: none; width: 25px; height: 22px; display: flex; align-items: center; justify-content: center; }
.b svg { width: 20px; height: 20px; }
.d { flex: none; width: 12px; height: 22px; position: relative; }
.d::after { content: ""; position: absolute; left: 3px; top: 9px; border: 3.500px solid transparent; border-top: 4px solid #ddd; border-bottom: 0; }
.s { flex: none; width: 8px; height: 20px; position: relative; }
.s::after { content: ""; position: absolute; left: 4px; top: 0; width: 1px; height: 20px; background: #686868; }
.g1 { margin-left: 1px; } .g2 { margin-left: 2px; } .g3 { margin-left: 3px; } .g4 { margin-left: 4px; } .g5 { margin-left: 5px; }
.r1 { margin-left: -1px; } .r2 { margin-left: -2px; } .r3 { margin-left: -3px; }
.box { width: 23px; height: 24px; border: 1px solid #999; border-radius: 3px; background: #565656; }
.box svg { width: 17px; height: 17px; }
.box2 { width: 22px; height: 25px; border: 1px solid #999; border-radius: 3px; background: #585858; }
.pil { color: #eee; font: 700 19px/22px "Liberation Serif", serif; }
.more { color: #eee; font: 700 14px/14px "Liberation Sans", sans-serif; margin-left: 3px; align-self: flex-start; }
.t1 .more { margin-top: 2px; }
.t2 .more { margin-top: 2px; }

.tlabel { width: 98px; color: #e2e2e2; white-space: nowrap; font-size: 14px; }
.cursor { flex: none; margin: 0 9px 0 3px; }
.combo { flex: none; position: relative; display: block; height: 23px; border: 1px solid #7a7a7a; padding: 0 0 0 5px; line-height: 21px; color: #e4e4e4; white-space: nowrap; overflow: hidden; font-size: 14px; }
.combo em { position: absolute; right: 0; top: 0; bottom: 0; width: 18px; background: #545454; }
.combo em::after { content: ""; position: absolute; left: 6px; top: 9px; border: 3px solid transparent; border-top: 4px solid #ddd; border-bottom: 0; }
.c-norm { width: 165px; margin-right: 5px; }
.c-font { width: 214px; margin-right: 6px; }
.c-size { width: 46px; }
.c-font em, .c-size em { background: transparent; }
.fmt { color: #eee; font: 700 15px/22px "Liberation Sans", sans-serif; }
.fi { font-style: italic; }
.fu { text-decoration: underline; }
.fa { font-weight: 400; border-bottom: 4px solid #f00; width: 18px; margin: 0 3px 0 5px; height: 22px; line-height: 18px; }
.hl { flex: none; margin-left: 6px; }
.abox { width: 15px; height: 18px; background: #fff; color: #222; font: 700 14px/18px "Liberation Sans", sans-serif; text-align: center; display: block; }

.tabs { flex: none; height: 28px; padding: 5px 0 0 9px; border-bottom: 1px solid #7a7a7a; }
.tab { width: 199px; height: 23px; background: #6a6a6a; border: 1px solid #7f7f7f; border-bottom: 0; display: flex; align-items: center; padding: 0 8px 0 4px; color: #eee; }
.tab span { flex: 1; text-align: center; margin-left: 3px; margin-right: 8px; }
.tab b { font-size: 14px; color: #eee; }

.body { flex: 1; display: flex; min-height: 0; }
.left { flex: none; width: 1286px; display: flex; flex-direction: column; }
.doc { flex: 1; min-height: 0; overflow: hidden; display: grid; grid-template-columns: 18px 794px; grid-template-rows: 17px 1122px; column-gap: 237px; row-gap: 26px; padding: 7px 0 0 6px; background: #4a4a4a; }
.corner { background: #3e3e3e; border: 1px solid #2e2e2e; position: relative; }
.corner span { position: absolute; left: 6px; top: 5px; width: 6px; height: 6px; border-left: 2px solid #fff; border-bottom: 2px solid #fff; }
.hruler { position: relative; display: flex; height: 17px; border: 1px solid #333; background: #3c3c3c; color: #ddd; font-size: 13px; line-height: 15px; }
.hruler::after { content: ""; position: absolute; left: 75px; top: 16px; width: 644px; height: 3px; background-image: linear-gradient(90deg, #2c2c2c 1px, transparent 1px); background-size: 47.250px 3px; background-position: 47px 0; }
.hr-side { flex: none; background: #656565; position: relative; overflow: hidden; }
.hr-l, .hr-r { width: 74px; background-image: linear-gradient(90deg, transparent 18.400px, #ccc 18.400px, #ccc 19.400px, transparent 19.400px), linear-gradient(90deg, transparent 9px, #ccc 9px, #ccc 10px, transparent 10px, transparent 28px, #ccc 28px, #ccc 29px, transparent 29px); background-size: 37.800px 6px, 37.800px 2px; background-position: 0 center, 0 center; background-repeat: repeat-x; }
.rn { position: absolute; top: 0; width: 20px; text-align: center; background: #656565; }
.rn1 { left: 27px; }
.rn18 { left: 26px; width: 22px; }
.hr-mid { flex: none; width: 644px; display: flex; padding-left: 19.900px; background-image: linear-gradient(90deg, transparent 18.400px, #bbb 18.400px, #bbb 19.400px, transparent 19.400px), linear-gradient(90deg, transparent 9px, #bbb 9px, #bbb 10px, transparent 10px, transparent 28px, #bbb 28px, #bbb 29px, transparent 29px); background-size: 37.800px 6px, 37.800px 2px; background-position: 1px center, 1px center; background-repeat: repeat-x; }
.hr-mid span { flex: none; width: 37.800px; text-align: center; background: radial-gradient(closest-side, #3c3c3c 70%, transparent 71%); }
.marker { position: absolute; top: 8px; width: 10px; height: 10px; background: #888; clip-path: polygon(50% 0, 100% 40%, 100% 100%, 0 100%, 0 40%); }
.m-l { left: 70px; top: 0; height: 22px; width: 9px; clip-path: polygon(0 0, 100% 0, 60% 40%, 100% 60%, 100% 100%, 0 100%, 0 60%, 40% 40%); }
.m-r { left: 714px; top: 8px; }
.vruler { position: relative; height: 1122px; background: linear-gradient(#686868, #686868) 0 100% / 100% 75px no-repeat, #3f3f3f; border: 1px solid #333; color: #b5c0cc; font-size: 13px; }
.vr-light { background: #686868; height: 75px; position: relative; text-align: center; }
.vr-top span { position: absolute; left: 0; right: 0; top: 28px; }
.vr-top::before, .vr-top::after { content: ""; position: absolute; left: 5px; width: 6px; height: 1px; background: #ccc; }
.vr-top::before { top: 18px; }
.vr-top::after { top: 56px; }
.vr-cells { display: flex; flex-direction: column; margin-top: 18.900px; }
.vr-cells span { flex: none; height: 37.800px; line-height: 37.800px; text-align: center; background: linear-gradient(#ccc, #ccc) 5px 0 / 6px 1px no-repeat; }
.page { position: relative; height: 1122px; background: #fff; }
.pl { position: absolute; display: block; }
.pl-v1 { left: 75px; top: 0; bottom: 0; border-left: 1px dotted #777; }
.pl-v2 { left: 718px; top: 0; bottom: 0; border-left: 1px dotted #777; }
.pl-h { left: 0; right: 0; top: 75px; border-top: 1px dotted #777; }
.caret { position: absolute; left: 75px; top: 75px; width: 2px; height: 14px; background: #111; }
.hscroll { flex: none; height: 16px; background: #383a37; border-top: 1px solid #222; display: flex; justify-content: space-between; }
.sb { width: 16px; background: #868686; position: relative; }
.sb::after { content: ""; position: absolute; top: 2px; border: 5px solid transparent; }
.sb-l::after { left: 1px; border-right: 6px solid #fff; border-left: 0; }
.sb-r::after { right: 2px; border-left: 6px solid #fff; border-right: 0; }
.vscroll { flex: none; width: 15px; height: 1513px; background: #3a3b38; border-right: 1px solid #222; border-left: 1px solid #222; display: flex; flex-direction: column; }
.vb { flex: none; height: 16px; background: #868686; position: relative; }
.vb::after { content: ""; position: absolute; left: 2px; border: 4.500px solid transparent; }
.vb-up::after { top: 2px; border-bottom: 6px solid #fff; border-top: 0; }
.vb-dn::after { top: 5px; border-top: 6px solid #fff; border-bottom: 0; }
.vfill { flex: 1; }
.vs { flex: none; height: 16px; color: #fff; border-top: 1px solid #222; font: 700 10px/15px "Liberation Sans", sans-serif; text-align: center; position: relative; }
.vdot i { position: absolute; left: 4px; top: 5px; width: 5px; height: 5px; background: #f0089c; }
.side { flex: 1; position: relative; padding: 3px 3px 0 13px; display: flex; flex-direction: column; }
.handle { position: absolute; left: 1px; top: 746px; width: 8px; height: 40px; border: 1px solid #383838; border-radius: 2px; }
.handle::after { content: ""; position: absolute; left: 2px; top: 16px; border: 3px solid transparent; border-left: 3px solid #fff; border-right: 0; }
.side-tabs { position: relative; height: 33px; padding-top: 1px; display: flex; align-items: flex-start; gap: 4px; border-bottom: 1px solid #333; }
.compass { width: 24px; height: 24px; border: 1px solid #999; border-radius: 3px; display: flex; align-items: center; justify-content: center; background: #4f4f4f; margin-right: 4px; }
.st { margin-top: 2px; }
.sd { position: absolute; right: 3px; top: 10px; border: 4px solid transparent; border-top: 5px solid #fff; border-bottom: 0; }
.side-label { flex: none; color: #c8cdd4; height: 32px; line-height: 36px; margin-left: 1px; font-size: 13.700px; }
.combo.c-side { width: 145px; height: 25px; line-height: 23px; }
.outline { flex: none; width: 145px; height: 1345px; margin-top: 6px; background: #fff; border: 1px solid #111; padding: 2px 4px 0 5px; }
.o-item { display: flex; align-items: center; height: 19px; }
.o-item i { flex: none; width: 14px; height: 17px; border: 1px solid #999; background: #fff; }
.o-item span { flex: 1; background: #e07800; color: #222; height: 18px; line-height: 18px; padding-left: 3px; font-size: 13.500px; }
.nav { flex: none; display: flex; gap: 6px; margin-top: 6px; }
.nav span { width: 25px; height: 20px; border: 1px solid #5c5c5c; background: #535353; display: flex; align-items: center; justify-content: center; }
.side-label.l2 { height: 31px; padding-top: 9px; line-height: 22px; }
.combo.c-side2 { width: 146px; height: 25px; line-height: 23px; font-size: 13.200px; }

.status { flex: none; height: 28px; display: flex; align-items: center; gap: 5px; border-top: 1px solid #5a5a5a; padding-left: 14px; color: #d8d8d8; font-size: 13.500px; }
.st-l { flex: none; white-space: nowrap; }
.w1 { width: 115px; }
.w2 { width: 152px; }
.sbx { flex: none; height: 20px; line-height: 18px; border: 1px solid #7a7a7a; padding-left: 3px; white-space: nowrap; color: #c8c8c8; }
.sw1 { width: 160px; } .sw2 { width: 109px; } .sw3 { width: 80px; } .sw4 { width: 74px; } .sw5 { width: 126px; } .sw6 { width: 138px; } .sw7 { width: 69px; } .sw8 { width: 46px; text-align: center; padding: 0; }
.vw { flex: none; width: 20px; height: 22px; display: flex; align-items: center; justify-content: center; }
.vw.on { width: 23px; height: 24px; border: 1px solid #999; border-radius: 3px; background: #565656; margin-left: -2px; }
.zm { flex: none; margin-left: 6px; color: #fff; }
.ztrack { flex: none; width: 110px; height: 1px; background: #222; position: relative; }
.ztrack i { position: absolute; left: 49px; top: -5px; width: 11px; height: 11px; border-radius: 50%; background: #fff; }
.zp { flex: none; color: #fff; }
.zpc { flex: none; margin-left: 13px; color: #d8d8d8; }
.status .more { margin: 1px 0 0 3px; }

.dlg { position: absolute; left: 166px; top: 577px; width: 1188px; height: 944px; border-radius: 6px 6px 0 0; box-shadow: 0 6px 28px rgba(0,0,0,.45); background: #f2f1f0; color: #4c4c4c; font-size: 14.300px; }
.dlg-title { height: 30px; padding-bottom: 2px; background: linear-gradient(#5a5850, #3f3e39); border-radius: 6px 6px 0 0; display: flex; align-items: center; justify-content: center; color: #dfdbd2; font-weight: 700; position: relative; font-size: 14.500px; }
.dlg-x { position: absolute; right: 6px; top: 8px; width: 14px; height: 14px; border-radius: 50%; background: #e5603a; color: #5a2010; font: 700 12px/14px "Liberation Sans", sans-serif; text-align: center; }
.dlg-body { padding: 13px 13px 0 12px; }
.pathbar { display: flex; height: 31px; gap: 3px; }
.pbtn { flex: none; height: 31px; border: 1px solid #bcb8b2; border-radius: 4px; background: linear-gradient(#fbfbfa, #e8e7e5); display: flex; align-items: center; justify-content: center; white-space: nowrap; }
.pen { width: 26px; margin: 0 11px 0 1px; }
.p1 { width: 164px; }
.p2 { width: 49px; }
.p3 { width: 81px; font-weight: 700; }
.ort { display: flex; align-items: center; height: 25px; margin-top: 14px; }
.ort label { width: 40px; }
.entry { flex: none; width: 1123px; height: 25px; line-height: 23px; background: #fff; border: 1px solid #b9b6b0; border-radius: 3px; padding-left: 3px; }
.panes { display: flex; margin-top: 13px; align-items: flex-start; }
.places { flex: none; width: 148px; height: 699px; background: #fff; border: 1px solid #c8c5c0; margin-right: 6px; }
.ph { height: 25px; line-height: 23px; padding-left: 3px; background: linear-gradient(#fbfbfa, #eceae8); border-bottom: 1px solid #b5b2ac; }
.pr { height: 23px; display: flex; align-items: center; padding-left: 2px; white-space: nowrap; }
.pr svg { flex: none; width: 16px; height: 16px; margin-right: 4px; }
.pl-list hr { border: 0; height: 1px; background: #e3e1de; margin: 2px 0 1px 1px; }
.files { flex: none; width: 997px; height: 691px; background: #fff; border: 1px solid #c8c5c0; border-right: 0; }
.fh { height: 25px; display: grid; grid-template-columns: 800px 56px 139px; background: linear-gradient(#fbfbfa, #eceae8); border-bottom: 1px solid #b5b2ac; line-height: 24px; }
.fh span { padding-left: 6px; border-right: 1px solid #dbd9d6; position: relative; white-space: nowrap; }
.fh .fh-n { padding-left: 5px; }
.fh-n i { position: absolute; right: 6px; top: 9px; border: 4px solid transparent; border-bottom: 6px solid #8a8a8a; border-top: 0; }
.fr { height: 23px; display: grid; grid-template-columns: 800px 56px 139px; line-height: 23px; }
.fr span { display: block; white-space: nowrap; }
.fr .n { display: flex; align-items: center; background: #eeeeee; border-right: 1px solid #b8b8b8; padding-left: 2px; }
.fr .n svg { flex: none; width: 16px; height: 16px; margin-right: 4px; }
.fr .z { background: #fff; border-right: 1px solid #d0d0d0; padding-left: 4px; font-size: 14px; }
.fr .t { background: #fff; padding-left: 5px; }
.fr:nth-child(odd) .n { background: #dcdcdc; }
.fr:nth-child(odd) .z, .fr:nth-child(odd) .t { background: #eeeeee; }
.fr.sel .n, .fr.sel .z, .fr.sel .t { background: linear-gradient(#f5814f, #ea7040); color: #fff; border-color: #f08a60; }
.fscroll { flex: none; position: relative; width: 13px; height: 691px; margin-left: 1px; background: #efeeec; border: 1px solid #d8d5d0; border-radius: 6px; }
.fs-thumb { position: absolute; left: 0; right: 0; top: 13px; bottom: 13px; border-radius: 6px; background: linear-gradient(90deg, #fff, #e6e5e3); border: 1px solid #c8c5c0; }
.fs-up { position: absolute; left: 2px; top: 4px; border: 3px solid transparent; border-bottom: 4px solid #aaa; border-top: 0; }
.fs-dn { position: absolute; left: 2px; bottom: 4px; border: 3px solid transparent; border-top: 4px solid #aaa; border-bottom: 0; }
.filterrow { display: flex; justify-content: space-between; align-items: flex-start; }
.pm { color: #d6d4d0; font-size: 16px; padding: 3px 0 0 10px; }
.filter { position: relative; flex: none; width: 441px; height: 28px; line-height: 26px; padding-left: 5px; border: 1px solid #bcb8b2; border-radius: 4px; background: linear-gradient(#fff, #eae9e7); }
.filter em { position: absolute; right: 6px; top: 7px; width: 6px; height: 14px; }
.filter em::before { content: ""; position: absolute; left: 0; top: 0; border: 3px solid transparent; border-bottom: 4px solid #666; border-top: 0; }
.filter em::after { content: ""; position: absolute; left: 0; bottom: 0; border: 3px solid transparent; border-top: 4px solid #666; border-bottom: 0; }
.check { display: flex; align-items: center; margin: 17px 0 0 3px; height: 16px; }
.check i { width: 14px; height: 15px; border: 1px solid #aaa; border-radius: 3px; background: #fff; margin-right: 7px; }
.actions { display: flex; justify-content: flex-end; gap: 8px; margin-top: 19px; }
.btn { width: 90px; height: 26px; line-height: 24px; text-align: center; border: 1px solid #bcb8b2; border-radius: 4px; background: linear-gradient(#fff, #ecebe9); }
.b-cancel { width: 91px; }
.btn.ok { background: linear-gradient(#f79a73, #f48a60); border-color: #d9805c; color: #7a4a38; }
```
